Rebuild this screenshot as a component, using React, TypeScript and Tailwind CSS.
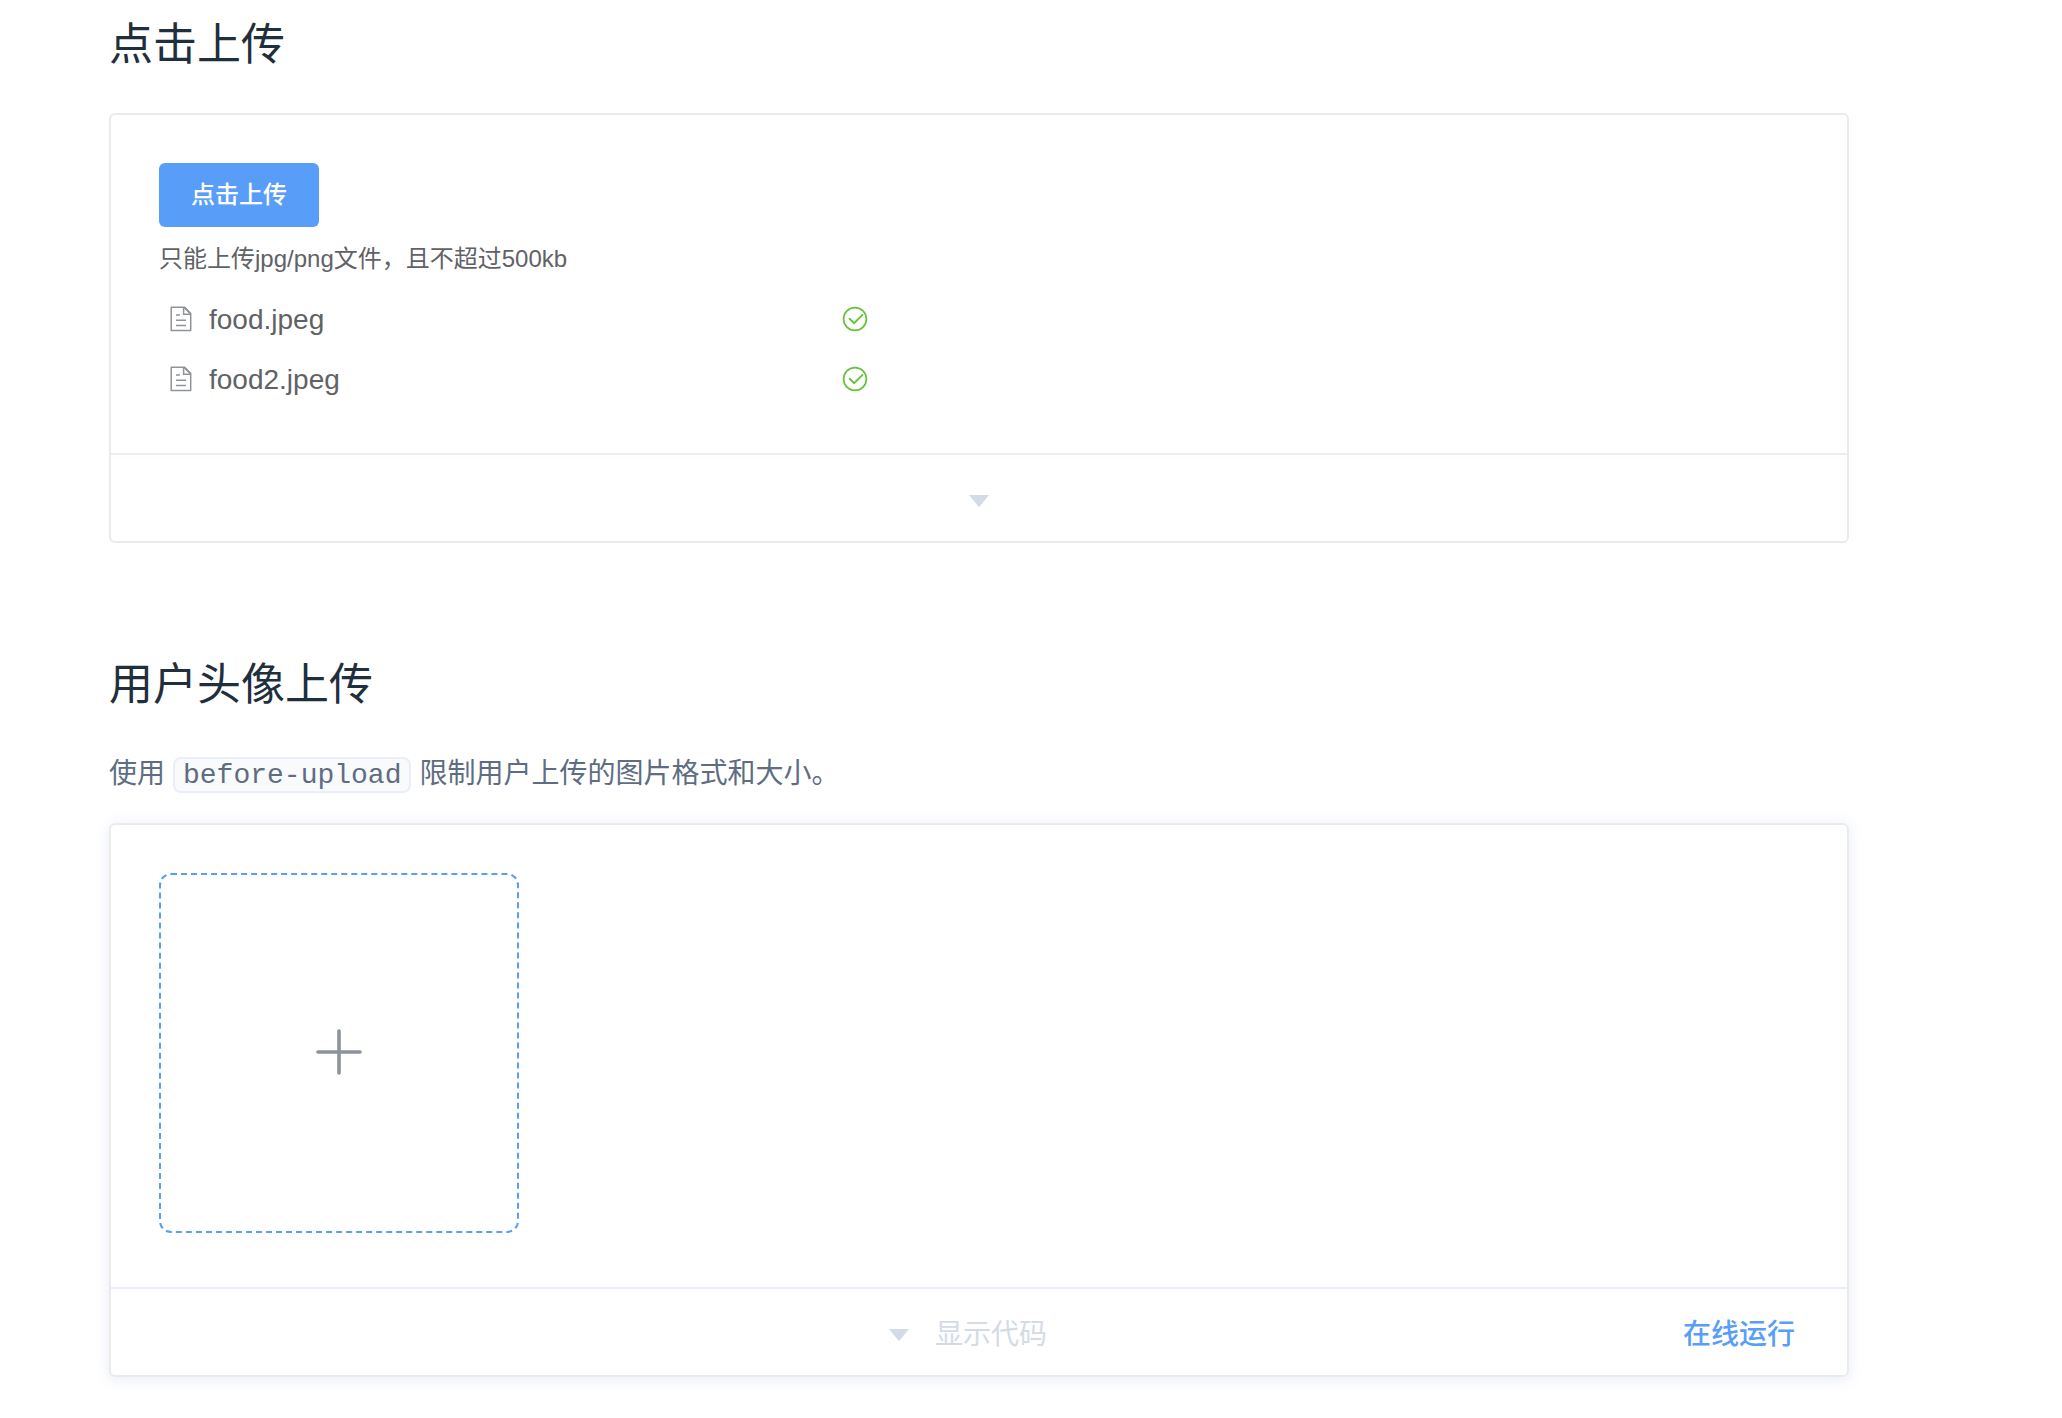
import React from 'react';

interface UploadFile {
  name: string;
}

const files: UploadFile[] = [{ name: 'food.jpeg' }, { name: 'food2.jpeg' }];

const DocumentIcon = () => (
  <svg className="h-7 w-7 text-[#909399]" viewBox="0 1 28 28" fill="none" stroke="currentColor" strokeWidth="1.5" aria-hidden="true">
    <path d="M4.2 2.3H17.6L23.7 8.6V25.6H4.2Z" strokeLinejoin="round" />
    <path d="M16.6 2.3V9.2H23.7" />
    <path d="M17.2 2.3L23.7 8.9" strokeWidth="1.8" />
    <path d="M9 10H13M9 15.2H19M9 20.4H19" />
  </svg>
);

const CheckIcon = () => (
  <svg className="h-7 w-7 text-[#67c23a]" viewBox="0 1 28 28" fill="none" stroke="currentColor" strokeWidth="1.7" aria-hidden="true">
    <circle cx="14" cy="14" r="11.4" />
    <path d="M8.6 13.8L13.1 18.1L21.5 9.9" strokeLinecap="round" strokeWidth="1.9" />
  </svg>
);

const Caret = () => (
  <svg className="h-3 w-5 shrink-0 fill-[#d3dce6]" viewBox="0 0 20 12" aria-hidden="true">
    <path d="M0 0H20L10.6 11.6Q10 12.2 9.4 11.6Z" />
  </svg>
);

const PlusIcon = () => (
  <svg className="h-12 w-12 text-[#8c939d]" viewBox="0 1 48 48" fill="none" stroke="currentColor" strokeWidth="3.6" strokeLinecap="round" aria-hidden="true">
    <path d="M24 3V45M3 24H45" />
  </svg>
);

const App: React.FC = () => {
  return (
    <main className="bg-white pt-3 pb-10 pl-[109px] pr-[213px] font-['Liberation_Sans','Noto_Sans_CJK_SC',sans-serif] text-[#606266]">
      <section>
        <h3 className="text-[44px] leading-[66px] text-[#1f2f3d]">点击上传</h3>

        <div className="mt-[35px] rounded-md border-2 border-[#ebebeb]">
          <div className="p-12">
            <button
              type="button"
              className="block h-16 rounded-md bg-[#589ef8] px-8 text-2xl font-medium text-white"
            >
              点击上传
            </button>
            <p className="mt-3 text-2xl leading-10">只能上传jpg/png文件，且不超过500kb</p>

            <ul className="mt-4 flex w-[720px] max-w-full flex-col gap-[10px]">
              {files.map((file) => (
                <li key={file.name} className="flex h-[50px] items-center pr-[10px] pl-2">
                  <DocumentIcon />
                  <a href="#" className="ml-[14px] flex-1 text-[28px] leading-[50px]">
                    {file.name}
                  </a>
                  <CheckIcon />
                </li>
              ))}
            </ul>
          </div>

          <button
            type="button"
            aria-label="显示代码"
            className="flex h-[88px] w-full items-center justify-center border-t-2 border-[#eaeefb] pt-[6px]"
          >
            <Caret />
          </button>
        </div>
      </section>

      <section className="mt-[109px]">
        <h3 className="text-[44px] leading-[66px] text-[#1f2f3d]">用户头像上传</h3>

        <p className="mt-[31px] text-[28px] leading-[50px] text-[#5e6d82]">
          使用
          <code className="mx-2 inline-block rounded-lg border-2 border-[#eaeefb] bg-[#f9fafc] px-2 pt-0.5 font-['Liberation_Mono',monospace] text-[28px] leading-[30px]">
            before-upload
          </code>
          限制用户上传的图片格式和大小。
        </p>

        <div className="mt-6 rounded-md border-2 border-[#ebebeb] shadow-[0_0_16px_0_rgba(232,237,250,0.6),0_4px_8px_0_rgba(232,237,250,0.5)]">
          <div className="px-12 pt-12 pb-[54px]">
            <button
              type="button"
              aria-label="上传头像"
              className="flex h-[360px] w-[360px] items-center justify-center rounded-xl border-2 border-dashed border-[#589ef8]"
            >
              <PlusIcon />
            </button>
          </div>

          <div className="grid h-[88px] grid-cols-[1fr_auto_1fr] items-center border-t-2 border-[#eaeefb] pt-[6px]">
            <button
              type="button"
              className="col-start-2 flex items-center gap-[26px] pr-[22px] text-[28px] text-[#d3dce6]"
            >
              <Caret />
              显示代码
            </button>
            <a href="#" className="justify-self-end pr-[52px] text-[28px] font-medium text-[#589ef8]">
              在线运行
            </a>
          </div>
        </div>
      </section>
    </main>
  );
};

export default App;
